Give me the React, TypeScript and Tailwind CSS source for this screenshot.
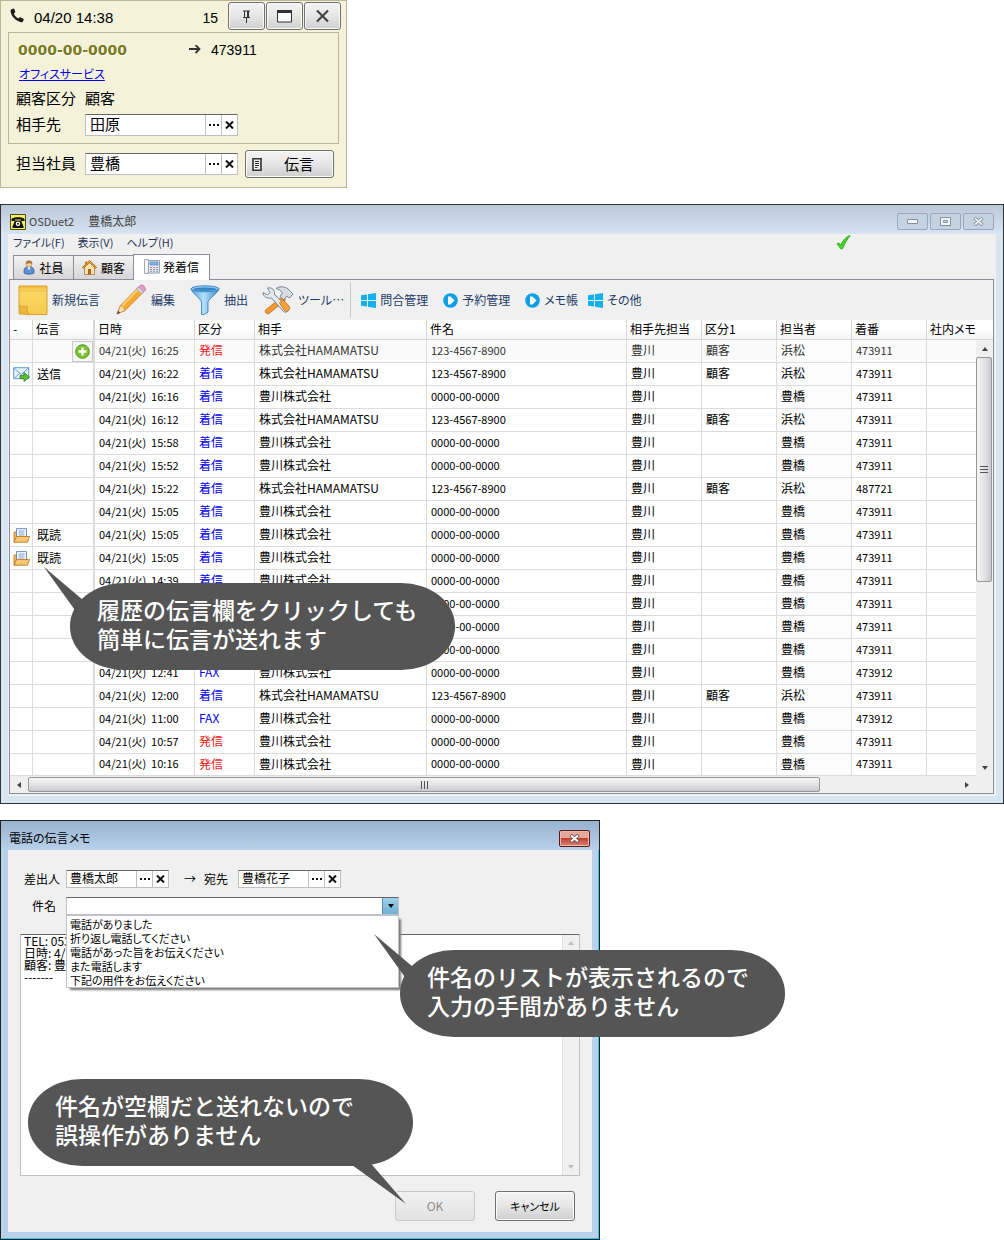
import { useState, type ReactNode } from "react";

type Row = {
  mark?: "sent" | "read";
  note?: string;
  time?: string;
  kind?: "発信" | "着信" | "FAX";
  hamamatsu?: boolean;
  ext?: string;
};

const rows: Row[] = [
  { time: "16:25", kind: "発信", hamamatsu: true },
  { mark: "sent", note: "送信", time: "16:22", kind: "着信", hamamatsu: true },
  { time: "16:16", kind: "着信" },
  { time: "16:12", kind: "着信", hamamatsu: true },
  { time: "15:58", kind: "着信" },
  { time: "15:52", kind: "着信" },
  { time: "15:22", kind: "着信", hamamatsu: true, ext: "487721" },
  { time: "15:05", kind: "着信" },
  { mark: "read", note: "既読", time: "15:05", kind: "着信" },
  { mark: "read", note: "既読", time: "15:05", kind: "着信" },
  { time: "14:39", kind: "着信" },
  {},
  {},
  {},
  { time: "12:41", kind: "FAX", ext: "473912" },
  { time: "12:00", kind: "着信", hamamatsu: true },
  { time: "11:00", kind: "FAX", ext: "473912" },
  { time: "10:57", kind: "発信" },
  { time: "10:16", kind: "発信" },
];

const headers = ["-", "伝言", "日時", "区分", "相手", "件名", "相手先担当", "区分1", "担当者", "着番", "社内メモ"];

const subjects = [
  "電話がありました",
  "折り返し電話してください",
  "電話があった旨をお伝えください",
  "また電話します",
  "下記の用件をお伝えください",
];

/* ---------- icons ---------- */

const Handset = () => (
  <svg width="15" height="15" viewBox="0 0 15 15" aria-hidden="true">
    <path d="M1.5 1.2 3.6.6c.5 0 .7.3.9.8l.7 2.2c.1.5 0 .8-.4 1.1l-1 .7c.6 2 2.3 3.9 4.6 5.100l1-.9c.4-.4.7-.4 1.200-.2l2.600 1.300c.6.300.7.600.5 1.100l-.8 1.800c-.300.600-.7.700-1.400.6C6.200 13.200 1 8.700.5 3c0-.9.3-1.500 1-1.800z" fill="#1c1c1c" />
  </svg>
);

const Pin = () => (
  <svg width="9" height="13" viewBox="0 0 9 13" aria-hidden="true">
    <path d="M1 1h7M2.500 1v6M6.500 1v6M1 7.500h7M4.500 7v6M5.500 1v6" stroke="#333" strokeWidth="1" fill="none" />
  </svg>
);

const Maximize = () => (
  <svg width="15" height="13" viewBox="0 0 15 13" aria-hidden="true">
    <path d="M.5.5h14v11.500H.5z" fill="#fafafa" stroke="#333" />
    <path d="M0 0h15v3H0z" fill="#333" />
  </svg>
);

const Cross = () => (
  <svg width="15" height="14" viewBox="0 0 15 14" aria-hidden="true">
    <path d="m2 1.500 11 11M13 1.500l-11 11" stroke="#444" strokeWidth="2.200" />
  </svg>
);

const ArrowRight = () => (
  <svg width="12" height="10" viewBox="0 0 12 10" aria-hidden="true">
    <path d="M0 4h10M6.500 0 10.500 4l-4 4" stroke="#333" strokeWidth="1.800" fill="none" />
  </svg>
);

const Doc = () => (
  <svg width="10" height="13" viewBox="0 0 10 13" aria-hidden="true">
    <path d="M1 .8h8v11.400H1z" fill="#eee" stroke="#333" strokeWidth="1.600" />
    <path d="M3 3.500h4M3 5.500h4M3 7.500h4M3 9.500h2.500" stroke="#333" />
  </svg>
);

const AppIcon = () => (
  <svg width="16" height="16" viewBox="0 0 16 16" aria-hidden="true">
    <path d="M.5.5h15v15H.5z" fill="#f4f060" stroke="#4a4a20" />
    <path d="M1.500 7V5C3 2.600 13 2.600 14.500 5v2h-3.500V5.500H5V7z" fill="#111" />
    <path d="M5 6.500h6l2.500 6v1.500h-11v-1.500z" fill="#111" />
    <circle cx="8" cy="9.800" r="2.300" fill="#fff" />
    <circle cx="8" cy="9.800" r="1" fill="#111" />
  </svg>
);

const Person = () => (
  <svg width="12" height="15" viewBox="0 0 12 15" aria-hidden="true">
    <path d="M1 11c0-3 2-4.500 5-4.500s5 1.500 5 4.500v2c-2 1.600-8 1.600-10 0z" fill="#5d93d4" stroke="#2d5c9c" strokeWidth=".8" />
    <path d="m4.500 7 1.500 3.500L7.500 7z" fill="#fff" />
    <circle cx="6" cy="4" r="3" fill="#f3cf9b" stroke="#b78645" strokeWidth=".6" />
    <path d="M2.800 4C2.500 1.500 4 .5 6 .5s3.500 1 3.200 3.500C8 3 5 3 2.800 4z" fill="#a87430" />
  </svg>
);

const House = () => (
  <svg width="15" height="15" viewBox="0 0 15 15" aria-hidden="true">
    <path d="M2.500 7 7.500 2.500l5 4.500v7.500h-10z" fill="#f8e3b0" stroke="#a67b33" strokeWidth=".8" />
    <path d="M3 1.500h2V5L3 6z" fill="#c9852a" />
    <path d="M.7 8 7.500 1.500 14.300 8" stroke="#b26a1b" strokeWidth="2" fill="none" />
    <path d="M1.200 7.500 7.500 1.500l6.300 6" stroke="#f4c65c" strokeWidth=".8" fill="none" />
    <path d="M6 9h3v5.500H6z" fill="#a86420" />
  </svg>
);

const DeskPhone = () => (
  <svg width="16" height="15" viewBox="0 0 16 15" aria-hidden="true">
    <path d="M4 1.500h11.500v12.500H4z" fill="#e4e8ee" stroke="#8d97a5" strokeWidth=".9" />
    <path d="M.6.600h3.800v13.800H.6z" fill="#fafafa" stroke="#8d97a5" strokeWidth=".9" />
    <path d="M6 3h8v3H6z" fill="#7fb2e5" stroke="#4d80b5" strokeWidth=".6" />
    <path d="M6 8.500h8M6 10.500h8M6 12.300h8" stroke="#8d97a5" strokeDasharray="2 1" />
  </svg>
);

const StickyNote = () => (
  <svg width="30" height="31" viewBox="0 0 30 31" aria-hidden="true">
    <defs>
      <linearGradient id="note" x1="0" y1="0" x2="0" y2="1">
        <stop offset="0" stopColor="#f2b93a" />
        <stop offset=".2" stopColor="#fbd765" />
        <stop offset="1" stopColor="#f6cb4c" />
      </linearGradient>
    </defs>
    <path d="M1 1h28v28.500H10L1 21z" fill="url(#note)" stroke="#dba12d" />
    <path d="M1 20.500c3 1.500 6 1.500 8 .5 0 3 .5 6 1.500 8.500L1 29z" fill="#eeb63b" stroke="#cf9323" strokeWidth=".7" />
    <path d="M2 6h26" stroke="#f0c04a" strokeWidth="1" />
  </svg>
);

const Pencil = () => (
  <svg width="32" height="32" viewBox="0 0 32 32" aria-hidden="true">
    <path d="m2 30 3.500-8.500L23.500 3l5 5L10 26.500z" fill="#f9a72d" stroke="#c97a18" strokeWidth=".8" />
    <path d="m7 22 17-17.500" stroke="#fdd07a" strokeWidth="2" />
    <path d="m2 30 3.500-8.500c2 .5 3.800 2.500 4.500 5z" fill="#f6dcae" stroke="#b58a49" strokeWidth=".7" />
    <path d="m2 30 1.200-3.200 2 2z" fill="#444" />
    <path d="m22.500 4 2.500-2.500c2.500-2 7 2.500 5 5L27.500 9z" fill="#e39bc0" stroke="#a86d9c" strokeWidth=".7" />
    <path d="m21.500 5 2-2 5 5-2 2z" fill="#d5d9df" stroke="#8d939c" strokeWidth=".6" />
  </svg>
);

const Funnel = () => (
  <svg width="30" height="31" viewBox="0 0 30 31" aria-hidden="true">
    <defs>
      <linearGradient id="funnel" x1="0" x2="1" y1="0" y2="0">
        <stop offset="0" stopColor="#4f9bd6" />
        <stop offset=".45" stopColor="#b5e0fb" />
        <stop offset="1" stopColor="#3c8bca" />
      </linearGradient>
    </defs>
    <path d="M1 3.500C1 7 11 14 11.500 17v12.500c2 .5 5-1 6.500-2.500V17C18.500 14 29 7 29 3.500z" fill="url(#funnel)" stroke="#2e75b0" strokeWidth=".8" />
    <ellipse cx="15" cy="3.800" rx="14" ry="3" fill="#8ccbf2" stroke="#2e75b0" strokeWidth=".8" />
    <ellipse cx="15" cy="4.300" rx="11.500" ry="1.700" fill="#3787c6" />
  </svg>
);

const Tools = () => (
  <svg width="32" height="29" viewBox="0 0 32 29" aria-hidden="true">
    <path d="m20 11 3.500 3L7 27.500c-2 1-4.500-1-3.500-3.500z" fill="#f39b32" stroke="#b96a17" strokeWidth=".8" />
    <path d="M14 2.500C18-.5 24 1 26 3l5 5-3.500 4-3-2-2.500 4-4-3.500 2.500-3.500C19 4.500 17 3.500 14 2.500z" fill="#d7dde5" stroke="#6f7985" strokeWidth=".9" />
    <path d="M1 6.500 5.500 9 8 6.500 5.500 2C10 1 13 4 12.500 8.500L26 21c2.500 2.500-1.500 7-4.500 4.500L9.500 12C5 13 1 10.500 1 6.500z" fill="#e3e8ee" stroke="#6f7985" strokeWidth=".9" />
    <path d="m17.500 17 3.500-3.500 6 6.500c2.500 3-2 7-4.500 4.500z" fill="#f5a43c" stroke="#b96a17" strokeWidth=".8" />
  </svg>
);

const WinLogo = () => (
  <svg width="15" height="15" viewBox="0 0 15 15" aria-hidden="true">
    <path d="M0 2.200 6 1.400V7H0zM7 1.200 15 0v7H7zM0 8h6v5.600l-6-.8zM7 8h8v7l-8-1.200z" fill="#12b0ec" />
  </svg>
);

const Play = () => (
  <svg width="15" height="15" viewBox="0 0 15 15" aria-hidden="true">
    <circle cx="7.500" cy="7.500" r="7.300" fill="#0c9fe6" />
    <path d="M5 3.500h2.500l4 4-4 4H5z" fill="#fff" />
  </svg>
);

const Check = () => (
  <svg width="15" height="15" viewBox="0 0 15 15" aria-hidden="true">
    <path d="M.8 9c1-1.500 2.500-1.200 3.900 1C6.500 6 9.500 2.500 13 .8h1.200C10.800 4.500 8.600 9 6.700 13.500c-1 .6-1.900.5-2.500-.3C3.200 11.600 2.200 10 .8 9z" fill="#4bd12f" stroke="#2aa318" strokeWidth=".8" />
  </svg>
);

const Plus = () => (
  <svg width="15" height="15" viewBox="0 0 15 15" aria-hidden="true">
    <circle cx="7.500" cy="7.500" r="6.800" fill="#7cc42f" stroke="#4d941a" />
    <path d="M7.500 3.500v8M3.500 7.500h8" stroke="#fff" strokeWidth="2.400" />
  </svg>
);

const SentMail = () => (
  <svg width="17" height="16" viewBox="0 0 17 16" aria-hidden="true">
    <path d="M.7 1.700h15v11H.7z" fill="#e8f3fd" stroke="#5d9bd3" />
    <path d="m1 2 7.200 6.500L15.500 2M1 12.500l5.500-5M15.500 12.500l-5.500-5" stroke="#5d9bd3" fill="none" />
    <path d="M7 9.500h4V6.500l5.500 4.500-5.500 4.500v-3H7z" fill="#5fc02f" stroke="#2f8516" strokeWidth=".8" />
  </svg>
);

const OpenFolder = () => (
  <svg width="17" height="15" viewBox="0 0 17 15" aria-hidden="true">
    <path d="M1 4h3v10H1z" fill="#f0b55a" stroke="#c17a22" strokeWidth=".8" />
    <path d="M3.500.600h10V10h-10z" fill="#f5f9ff" stroke="#5b84c0" strokeWidth=".9" />
    <path d="M5.500 3h6M5.500 5h6M5.500 7h6" stroke="#7ea2d6" />
    <path d="M3.500 8.500h13l-2 5.700H1z" fill="#f9c673" stroke="#c17a22" strokeWidth=".9" />
  </svg>
);

const Triangle = ({ dir, color = "#444" }: { dir: "up" | "down" | "left" | "right"; color?: string }) => {
  const d = { up: "M4 2 7 6H1z", down: "M1 2h6L4 6z", left: "M2 4 6 1v6z", right: "M6 4 2 1v6z" }[dir];
  return (
    <svg width="8" height="8" viewBox="0 0 8 8" aria-hidden="true">
      <path d={d} fill={color} />
    </svg>
  );
};

/* ---------- shared controls ---------- */

const grayButton =
  "flex items-center justify-center rounded-[3px] border border-[#707070] bg-linear-to-b from-[#f4f4f4] via-[#e6e6e6] to-[#cfcfcf] shadow-[inset_0_0_0_1px_#fafafa]";

function LookupField({ id, value, label, large }: { id: string; value: string; label: string; large?: boolean }) {
  return (
    <div
      className={`flex shrink-0 border border-[#c0c0c4] border-t-[#666] bg-white ${
        large ? "h-[22px] w-[153px]" : "h-[18px] w-[103px]"
      }`}
    >
      <input
        id={id}
        defaultValue={value}
        className={`min-w-0 flex-1 bg-transparent pb-0.5 outline-none ${large ? "px-1 text-[15px]" : "px-[3px] text-[12px]"}`}
      />
      <button type="button" aria-label={`${label}を選択`} className="flex w-4 items-center justify-center border-l border-[#c0c0c4]">
        <svg width="10" height="2" viewBox="0 0 10 2" aria-hidden="true">
          <path d="M0 0h2v2H0zM4 0h2v2H4zM8 0h2v2H8z" fill="#111" />
        </svg>
      </button>
      <button type="button" aria-label={`${label}を消去`} className="flex w-4 items-center justify-center border-l border-[#c0c0c4]">
        <svg width="9" height="8" viewBox="0 0 9 8" aria-hidden="true">
          <path d="m1 .5 7 7M8 .5l-7 7" stroke="#111" strokeWidth="2" />
        </svg>
      </button>
    </div>
  );
}

function Callout({ className, children, tail }: { className: string; children: ReactNode; tail: ReactNode }) {
  return (
    <div className={`absolute z-20 w-[385px] ${className}`}>
      {tail}
      <p className="relative rounded-[54px/43px] bg-[#555] px-[27px] pt-3 pb-[17px] text-[23px] leading-[29px] font-medium whitespace-nowrap text-white [font-feature-settings:normal]">
        {children}
      </p>
    </div>
  );
}

const TailUpLeft = () => (
  <svg width="40" height="46" viewBox="0 0 40 46" className="absolute -top-4 -left-[26px]" aria-hidden="true">
    <path d="M0 0 39 33 33 46z" fill="#555" />
  </svg>
);

/* ---------- incoming call card ---------- */

function CallCard() {
  return (
    <section className="w-full max-w-[347px] border border-[#b8b796] bg-[#f4f3da] text-[15px]">
      <header className="flex h-[31px] items-start gap-px pr-[5px] pl-[9px]">
        <span className="mt-[7px]">
          <Handset />
        </span>
        <span className="mt-2 ml-2 flex-1 font-['Liberation_Sans',sans-serif] leading-[18px]">04/20 14:38</span>
        <span className="mt-2 mr-[9px] font-['Liberation_Sans',sans-serif] text-[14px] leading-[18px]">15</span>
        <button type="button" aria-label="固定" className={`${grayButton} mt-px h-7 w-[37px]`}><Pin /></button>
        <button type="button" aria-label="最大化" className={`${grayButton} mt-px h-7 w-[37px]`}><Maximize /></button>
        <button type="button" aria-label="閉じる" className={`${grayButton} mt-px h-7 w-[37px]`}><Cross /></button>
      </header>
      <div className="mx-[7px] border border-[#b8b796] px-[7px] py-[5px]">
        <div className="flex h-6 items-center">
          <span className="w-[173px] pl-0.5 font-['DejaVu_Sans',sans-serif] text-[14px] font-bold text-[#7a7b1c] [text-shadow:1px_1px_0_#fff]">0000-00-0000</span>
          <ArrowRight />
          <span className="ml-[10px] font-['Liberation_Sans',sans-serif] text-[14px]">473911</span>
        </div>
        <div className="flex h-6 items-center pl-[3px]">
          <a href="#office" className="text-[12px] text-[#0000f0] underline">オフィスサービス</a>
        </div>
        <div className="flex h-[26px] items-center pb-px">
          <span className="w-[69px]">顧客区分</span>
          <span>顧客</span>
        </div>
        <div className="flex h-[26px] items-center">
          <label htmlFor="partner" className="w-[69px] pb-0.5">相手先</label>
          <LookupField id="partner" label="相手先" value="田原" large />
        </div>
      </div>
      <div className="flex items-center pt-1.5 pr-3 pb-[9px] pl-[15px]">
        <label htmlFor="staff" className="w-[69px] pb-px">担当社員</label>
        <LookupField id="staff" label="担当社員" value="豊橋" large />
        <button type="button" className={`${grayButton} ml-[7px] h-7 w-[89px] justify-start gap-[22px] pl-1.5`}>
          <Doc />
          伝言
        </button>
      </div>
    </section>
  );
}

/* ---------- main window ---------- */

const caption = "flex h-[17px] w-[31px] items-center justify-center rounded-[2px] border border-[#9aa7bb] bg-[#c5d2e0]";

function ToolItem({ icon, children, className = "" }: { icon: ReactNode; children: ReactNode; className?: string }) {
  return (
    <button type="button" className={`flex shrink-0 items-center gap-1 whitespace-nowrap ${className}`}>
      {icon}
      {children}
    </button>
  );
}

const bareCell = "overflow-hidden whitespace-nowrap border-b border-[#dcdcdc] p-0";
const cell = `${bareCell} border-r pb-0.5 pl-1`;

function HistoryTable() {
  return (
    <table className="w-full table-fixed border-separate border-spacing-0 bg-white">
      <colgroup>
        <col className="w-[23px]" />
        <col className="w-[62px]" />
        <col className="w-[100px]" />
        <col className="w-[60px]" />
        <col className="w-[172px]" />
        <col />
        <col className="w-[75px]" />
        <col className="w-[75px]" />
        <col className="w-[75px]" />
        <col className="w-[75px]" />
        <col className="w-[49px]" />
      </colgroup>
      <thead>
        <tr className="h-5 bg-linear-to-b from-white from-50% to-[#f1f2f4]">
          {headers.map((h, i) => (
            <th
              key={h}
              scope="col"
              className={`overflow-hidden border-b border-[#d5d5d5] p-0 pb-0.5 pl-[3px] text-left leading-[17px] font-normal whitespace-nowrap ${
                i === 10 ? "" : i === 1 ? "border-r-2" : "border-r"
              }`}
            >
              {h}
            </th>
          ))}
        </tr>
      </thead>
      <tbody>
        {rows.map((r, i) => (
          <tr key={i} className={`${i === 18 ? "h-[22px]" : "h-[23px]"} ${i === 0 ? "bg-[#fafafa] text-[#333]" : ""}`}>
            <td className={`${bareCell} border-r pl-[3px]`}>
              {r.mark === "sent" && <SentMail />}
              {r.mark === "read" && <OpenFolder />}
            </td>
            <td className={`${bareCell} border-r-2 pl-1`}>
              {i === 0 ? (
                <button type="button" aria-label="伝言を追加" className="ml-auto flex size-[21px] items-center justify-center border border-[#c8c8c8] bg-[#f8f8f8]">
                  <Plus />
                </button>
              ) : (
                r.note
              )}
            </td>
            <td className={`${cell} text-[11px]`}>{r.time && <>04/21(火)&nbsp; {r.time}</>}</td>
            <td className={`${cell} ${r.kind === "発信" ? "text-[#f01818]" : "text-[#0000f0]"}`}>{r.kind}</td>
            <td className={cell}>{r.time && (r.hamamatsu ? "株式会社HAMAMATSU" : "豊川株式会社")}</td>
            <td className={`${cell} text-[11px]`}>{r.hamamatsu ? "123-4567-8900" : "0000-00-0000"}</td>
            <td className={cell}>豊川</td>
            <td className={cell}>{r.hamamatsu ? "顧客" : ""}</td>
            <td className={`${cell} bg-[#fcfcfc]`}>{r.hamamatsu ? "浜松" : "豊橋"}</td>
            <td className={`${cell} text-[11px]`}>{r.ext ?? "473911"}</td>
            <td className={bareCell} />
          </tr>
        ))}
      </tbody>
    </table>
  );
}

function MainWindow() {
  return (
    <section className="relative border border-[#333] bg-[#d7e4f2] text-[12px]">
      <header className="flex h-[29px] items-center bg-linear-to-b from-[#bac8d7] to-[#d7e4f2] px-[9px] pt-1 text-[#444]">
        <AppIcon />
        <h1 className="ml-[3px] flex-1 pb-0.5">
          <span className="mr-[14px] text-[11px]">OSDuet2</span>豊橋太郎
        </h1>
        <div className="flex gap-0.5">
          <button type="button" aria-label="最小化" className={caption}>
            <svg width="11" height="5" viewBox="0 0 11 5" aria-hidden="true"><path d="M.5.5h10v4H.5z" fill="#f4f7fa" stroke="#8491a3" /></svg>
          </button>
          <button type="button" aria-label="最大化" className={caption}>
            <svg width="11" height="9" viewBox="0 0 11 9" aria-hidden="true"><path d="M.5.5h10v8H.5zM3.500 3.500v2h4v-2z" fillRule="evenodd" fill="#f4f7fa" stroke="#8491a3" /></svg>
          </button>
          <button type="button" aria-label="閉じる" className={caption}>
            <svg width="11" height="9" viewBox="0 0 11 9" aria-hidden="true">
              <path d="m1.500 1 8 7M9.500 1l-8 7" stroke="#8491a3" strokeWidth="3.500" />
              <path d="m2 1.400 7 6.200M9 1.400 2 7.600" stroke="#f4f7fa" strokeWidth="1.800" />
            </svg>
          </button>
        </div>
      </header>
      <div className="mx-[7px] mb-[7px] bg-[#f0f0f0] pb-0.5">
        <nav className="flex h-[18px] items-center gap-[13px] pb-0.5 pl-[5px] text-[11px] text-[#1e3358]" aria-label="メニュー">
          <button type="button">ファイル(F)</button>
          <button type="button">表示(V)</button>
          <button type="button">ヘルプ(H)</button>
          <span className="mr-[145px] ml-auto"><Check /></span>
        </nav>
        <div role="tablist" className="relative z-10 flex h-7 items-end pl-[5px]">
          <button type="button" role="tab" aria-selected="false" className="mb-px flex h-6 w-[61px] items-center justify-center gap-1 border border-b-0 border-[#8c8d98] bg-linear-to-b from-[#f3f3f3] to-[#d6d6d6]"><Person />社員</button>
          <button type="button" role="tab" aria-selected="false" className="mb-px flex h-6 w-[60px] items-center justify-center gap-1 border-t border-r border-[#8c8d98] bg-linear-to-b from-[#f3f3f3] to-[#d6d6d6]"><House />顧客</button>
          <button type="button" role="tab" aria-selected="true" className="-ml-px flex h-[26px] w-[77px] items-center justify-center gap-[3px] border border-b-0 border-[#8c8d98] bg-white pb-0.5"><DeskPhone />発着信</button>
        </div>
        <div className="-mt-px mr-0.5 ml-px border border-[#8c8d98]">
          <div className="flex h-10 items-center overflow-hidden pl-2 text-[#1e3c66]">
            <ToolItem icon={<StickyNote />}>新規伝言</ToolItem>
            <ToolItem icon={<Pencil />} className="ml-[15px]">編集</ToolItem>
            <ToolItem icon={<Funnel />} className="ml-[15px]">抽出</ToolItem>
            <ToolItem icon={<Tools />} className="ml-[14px]">ツール…</ToolItem>
            <span className="ml-1.5 h-9 w-px shrink-0 bg-[#c8c8c8]" />
            <ToolItem icon={<WinLogo />} className="ml-[10px]">問合管理</ToolItem>
            <ToolItem icon={<Play />} className="ml-[15px]">予約管理</ToolItem>
            <ToolItem icon={<Play />} className="ml-[15px]">メモ帳</ToolItem>
            <ToolItem icon={<WinLogo />} className="ml-[10px]">その他</ToolItem>
          </div>
          <div className="flex">
            <div className="min-w-0 flex-1"><HistoryTable /></div>
            <div className="flex w-[17px] shrink-0 flex-col bg-[#efefef]" aria-hidden="true">
              <div className="h-5 border-b border-[#d5d5d5] bg-linear-to-b from-white from-50% to-[#f1f2f4]" />
              <div className="flex h-[17px] items-center justify-center"><Triangle dir="up" /></div>
              <div className="mr-px flex h-[225px] flex-col items-center justify-center gap-0.5 rounded-[2px] border border-[#979797] bg-linear-to-r from-[#f5f5f5] via-[#e4e4e6] to-[#c9cacd]">
                <span className="h-px w-2 bg-[#555]" />
                <span className="h-px w-2 bg-[#555]" />
                <span className="h-px w-2 bg-[#555]" />
              </div>
              <div className="mt-auto flex h-[17px] items-center justify-center"><Triangle dir="down" /></div>
            </div>
          </div>
          <div className="flex h-[17px] items-center bg-[#efefef] pr-[17px]" aria-hidden="true">
            <div className="flex w-[18px] justify-center"><Triangle dir="left" /></div>
            <div className="flex h-[15px] w-[82%] items-center justify-center gap-0.5 rounded-[2px] border border-[#979797] bg-linear-to-b from-[#f5f5f5] via-[#e4e4e6] to-[#c9cacd]">
              <span className="h-2 w-px bg-[#555]" />
              <span className="h-2 w-px bg-[#555]" />
              <span className="h-2 w-px bg-[#555]" />
            </div>
            <div className="ml-auto flex w-[18px] justify-center"><Triangle dir="right" /></div>
          </div>
        </div>
      </div>
      <Callout className="top-[378px] left-[69px]" tail={<TailUpLeft />}>
        履歴の伝言欄をクリックしても
        <br />
        簡単に伝言が送れます
      </Callout>
    </section>
  );
}

/* ---------- message dialog ---------- */

function MessageDialog() {
  const [open, setOpen] = useState(true);
  const [subject, setSubject] = useState("");
  return (
    <section className="relative w-full max-w-[600px] border border-[#222] bg-[#b9d1ea] text-[12px] shadow-[inset_-1px_-1px_0_#2cc8f0]">
      <header className="flex h-[29px] items-center justify-between bg-linear-to-b from-[#98b3d0] to-[#b9d1ea] pt-1.5 pr-[9px] pl-2">
        <h2 className="pb-0.5">電話の伝言メモ</h2>
        <button type="button" aria-label="閉じる" className="flex h-[17px] w-[31px] items-center justify-center rounded-[2px] border border-[#5a1a1a] bg-linear-to-b from-[#e8a79b] from-45% via-[#c0402c] via-50% to-[#d98273] shadow-[inset_0_0_0_1px_#efb8ae]">
          <svg width="11" height="9" viewBox="0 0 11 9" aria-hidden="true">
            <path d="m1.500 1 8 7M9.500 1l-8 7" stroke="#5d4a55" strokeWidth="3.500" />
            <path d="m2 1.400 7 6.200M9 1.400 2 7.600" stroke="#fff" strokeWidth="2" />
          </svg>
        </button>
      </header>
      <div className="mx-[7px] mb-[7px] bg-[#f0f0f0] px-3 pt-5 pb-[11px]">
        <div className="flex h-[18px] items-center pl-1">
          <label htmlFor="from" className="w-[42px] pb-px">差出人</label>
          <LookupField id="from" label="差出人" value="豊橋太郎" />
          <span className="ml-[15px] w-5">→</span>
          <label htmlFor="to" className="w-[34px] pb-px">宛先</label>
          <LookupField id="to" label="宛先" value="豊橋花子" />
        </div>
        <div className="relative z-10 mt-[9px] flex h-[18px] items-center pl-3">
          <label htmlFor="subject" className="w-[34px] pb-px">件名</label>
          <div className="flex h-[18px] w-[333px] border border-[#c0c0c8] border-t-[#666] bg-white">
            <input id="subject" role="combobox" aria-expanded={open} aria-controls="subject-list" value={subject} onChange={(e) => setSubject(e.target.value)} className="min-w-0 flex-1 px-1 outline-none" />
            <button type="button" aria-label="件名リスト" onClick={() => setOpen(!open)} className="flex w-4 items-center justify-center border-l border-[#5c8fae] bg-linear-to-b from-[#9fd0ea] to-[#6fb0d6]">
              <Triangle dir="down" color="#000" />
            </button>
          </div>
          {open && (
            <select
              id="subject-list"
              size={5}
              aria-label="件名の候補"
              onChange={(e) => setSubject(e.target.value)}
              className="absolute top-[18px] left-[46px] h-[73px] w-[333px] overflow-hidden border border-[#c0c0c8] bg-white p-0 pl-px text-[11px] shadow-[3px_3px_2px_-1px_#777] outline-none"
            >
              {subjects.map((s) => (
                <option key={s} className="h-[14px] min-h-0 p-0 pl-0.5 leading-[12px]">{s}</option>
              ))}
            </select>
          )}
        </div>
        <div className="mt-[19px] flex h-[242px] border border-[#c0c0c8] border-t-[#666] bg-white">
          <textarea
            aria-label="伝言の内容"
            defaultValue={"TEL: 053\n日時: 4/\n顧客: 豊\n-------"}
            className="min-w-0 flex-1 resize-none overflow-hidden px-[3px] text-[12px] leading-[12px] outline-none"
          />
          <div className="flex w-[17px] flex-col items-center justify-between border-l border-[#e0e0e0] bg-[#f0f0f0] py-1" aria-hidden="true">
            <Triangle dir="up" color="#c0c0c0" />
            <Triangle dir="down" color="#c0c0c0" />
          </div>
        </div>
        <div className="mt-[15px] flex justify-end gap-5 pr-[5px]">
          <button type="button" disabled className="h-[30px] w-20 rounded-[3px] border border-[#cacaca] bg-linear-to-b from-[#f1f1f1] to-[#e2e2e2] text-[#8c8c8c]">OK</button>
          <button type="button" className={`${grayButton} h-[30px] w-20 text-[11px]`}>キャンセル</button>
        </div>
      </div>
      <Callout className="top-[129px] left-[399px]" tail={<TailUpLeft />}>
        件名のリストが表示されるので
        <br />
        入力の手間がありません
      </Callout>
      <Callout
        className="top-[258px] left-[27px]"
        tail={
          <svg width="60" height="46" viewBox="0 0 60 46" className="absolute top-20 left-[320px]" aria-hidden="true">
            <path d="M0 0h19L58 45 4 6z" fill="#555" />
          </svg>
        }
      >
        件名が空欄だと送れないので
        <br />
        誤操作がありません
      </Callout>
    </section>
  );
}

export default function App() {
  return (
    <main className="flex flex-col gap-4 bg-white font-['Noto_Sans_CJK_JP',sans-serif] text-black [font-feature-settings:'palt']">
      <CallCard />
      <MainWindow />
      <MessageDialog />
    </main>
  );
}
